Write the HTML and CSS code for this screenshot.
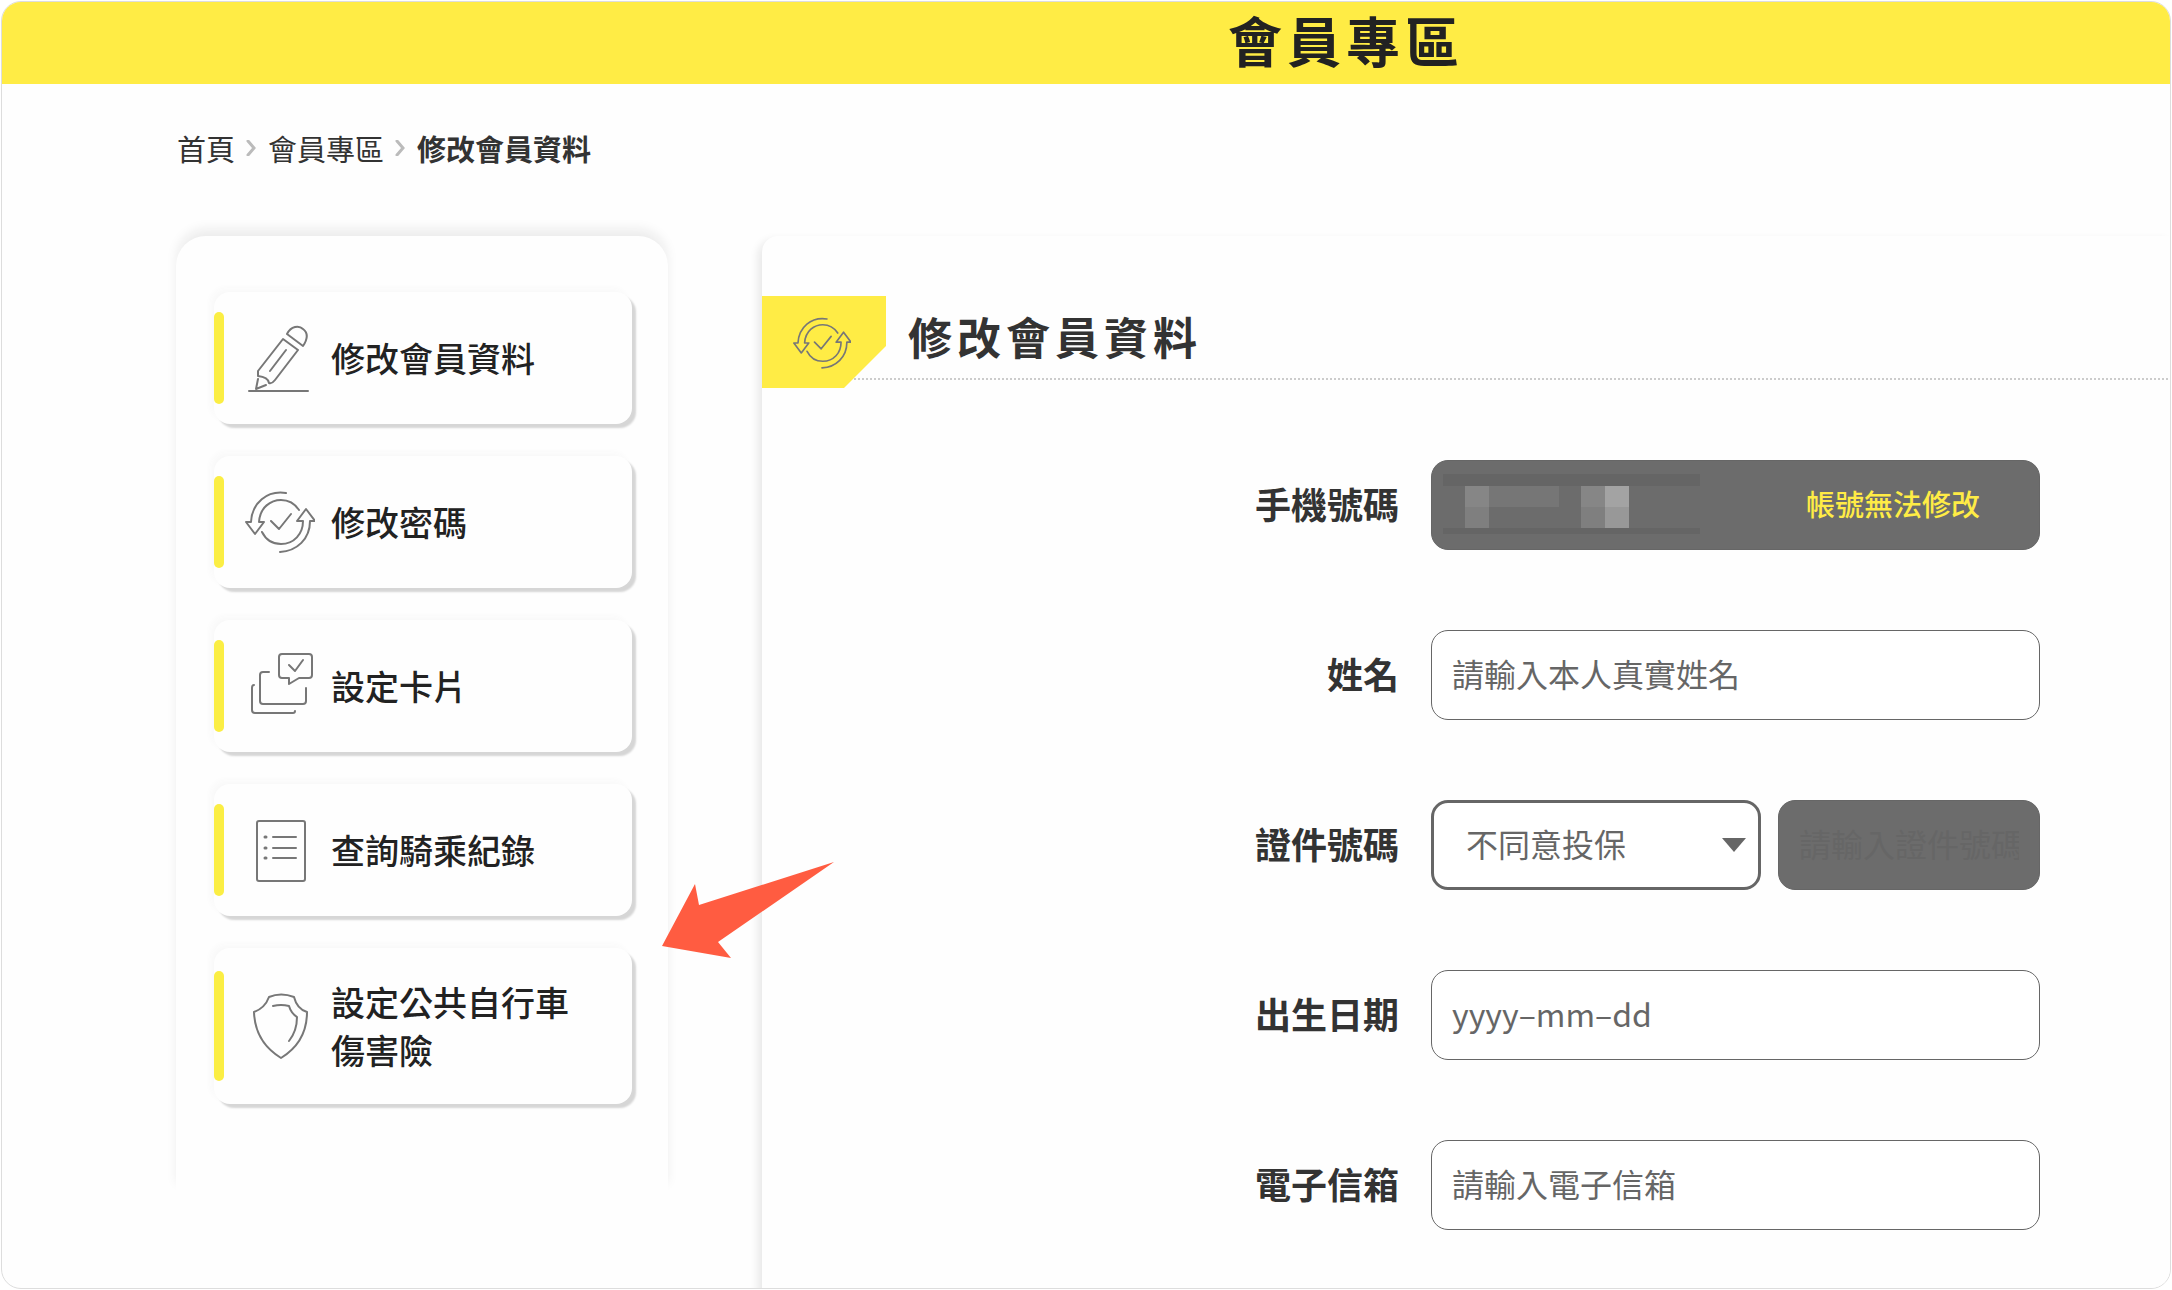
FILE: index.html
```html
<!DOCTYPE html>
<html lang="zh-Hant">
<head>
<meta charset="utf-8">
<title>會員專區</title>
<link rel="stylesheet" href="styles.css">
</head>
<body>
<svg class="defs" aria-hidden="true">
  <symbol id="icon-sync" viewBox="0 0 70 62">
    <path d="M41 2C22-1 7 12 6 31H1L10 43L19 31H14C15 16 26 9 36 9C43 9 50 13 54 19M17 41C21 49 28 53 36 53C49 53 58 43 58 30H52L61 18L70 30H65C65 48 52 60 35 61M26 30L34 38L46 23"/>
  </symbol>
</svg>
<div class="window">
  <header class="banner"><h1>會員專區</h1></header>
  <nav class="crumbs" aria-label="breadcrumb">
    <a href="#">首頁</a>
    <svg class="chevron" viewBox="0 0 9 16"><path d="M1 1L7 8L1 15"/></svg>
    <a href="#">會員專區</a>
    <svg class="chevron" viewBox="0 0 9 16"><path d="M1 1L7 8L1 15"/></svg>
    <strong>修改會員資料</strong>
  </nav>
  <div class="columns">
    <nav class="sidebar">
      <a class="item" href="#">
        <svg class="icon" viewBox="0 0 70 70"><path d="M4 68H63M38 16L53 27L30 57Q27 61 24 60Q23 54 13 53V48ZM42 11C46 3 54 2 58 6C62 9 64 14 58 23ZM41 27L25 48M13 56L11 66L21 62"/></svg>
        <span>修改會員資料</span>
      </a>
      <a class="item" href="#">
        <svg class="icon"><use href="#icon-sync"/></svg>
        <span>修改密碼</span>
      </a>
      <a class="item" href="#">
        <svg class="icon" viewBox="0 4 70 70"><path d="M24 25H18Q15 25 15 28V54Q15 57 18 57H58Q61 57 61 54V41M9 38Q7 38 7 41V63Q7 66 10 66H48Q50 66 50 64M37 7H64Q67 7 67 10V28Q67 31 64 31H54L44 37V31H37Q34 31 34 28V10Q34 7 37 7ZM44 18L50 24L58 13"/></svg>
        <span>設定卡片</span>
      </a>
      <a class="item" href="#">
        <svg class="icon" viewBox="0 0 70 70"><path d="M14 6H58Q60 6 60 8V64Q60 66 58 66H14Q12 66 12 64V8Q12 6 14 6ZM28 22H51M28 33H51M28 43H51"/><path class="dots" d="M20 22H21M20 33H21M20 43H21"/></svg>
        <span>查詢騎乘紀錄</span>
      </a>
      <a class="item" href="#">
        <svg class="icon" viewBox="0 0 70 70"><path d="M24 6Q36 1 49 6Q52 18 62 21Q62 51 36 67Q10 51 9 21Q20 17 24 6ZM28 15Q36 13 44 15Q46 22 52 26Q52 40 44 50"/></svg>
        <span>設定公共自行車傷害險</span>
      </a>
      <svg class="pointer" viewBox="0 0 173 97"><path d="M172 0L56 80L69 96L0 84L33 22L37 43Z"/></svg>
    </nav>
    <main class="panel">
      <div class="panel-head">
        <div class="tag"><svg><use href="#icon-sync"/></svg></div>
        <h2>修改會員資料</h2>
      </div>
      <form class="form">
        <label for="phone">手機號碼</label>
        <div class="field locked">
          <input id="phone" type="text" disabled>
          <span class="mask" aria-hidden="true"><i class="mid"></i><i class="faint"></i><i class="gap"></i><i class="mid"></i><i class="light"></i></span>
          <span class="note">帳號無法修改</span>
        </div>
        <label for="name">姓名</label>
        <div class="field"><input id="name" type="text" placeholder="請輸入本人真實姓名"></div>
        <label for="idtype">證件號碼</label>
        <div class="field pair">
          <div class="select">
            <select id="idtype"><option>不同意投保</option></select>
            <svg class="caret" viewBox="0 0 24 14"><path d="M0 0H24L12 14Z"/></svg>
          </div>
          <input class="idno" type="text" aria-label="證件號碼" placeholder="請輸入證件號碼" disabled>
        </div>
        <label for="birth">出生日期</label>
        <div class="field"><input id="birth" type="text" placeholder="yyyy–mm–dd"></div>
        <label for="email">電子信箱</label>
        <div class="field"><input id="email" type="email" placeholder="請輸入電子信箱"></div>
      </form>
    </main>
  </div>
</div>
</body>
</html>
```
FILE: styles.css
```css
* { box-sizing: border-box; }
body {
  margin: 0;
  padding: 1px;
  color: #333;
  background: #fff;
  font-family: "Noto Sans CJK TC", "Noto Sans", sans-serif;
}
h1, h2 { margin: 0; }
a { color: inherit; text-decoration: none; }
svg { fill: none; stroke: #777; stroke-width: 2; stroke-linejoin: round; stroke-linecap: round; }
.defs { display: none; }
.window {
  display: flex;
  flex-direction: column;
  min-height: calc(100vh - 2px);
  max-height: calc(100vh - 2px);
  overflow: hidden;
  border: 1px solid #ddd;
  border-radius: 20px;
  background: #fefefe;
}
.banner {
  flex: none;
  height: 82px;
  padding-left: 520px;
  background: #ffec45;
  text-align: center;
}
.banner h1 {
  color: #222;
  font-size: 54px;
  line-height: 78px;
  margin-top: -1px;
  letter-spacing: 5px;
}
.crumbs {
  flex: none;
  display: flex;
  align-items: center;
  gap: 11px;
  padding: 42px 175px 2px;
  font-size: 29px;
  line-height: 44px;
}
.chevron { width: 11px; height: 16px; stroke: #bbb; stroke-width: 3; stroke-linejoin: miter; }
.columns {
  flex: 1;
  display: flex;
  align-items: flex-start;
  gap: 94px;
  padding: 64px 0 0 174px;
}
.sidebar {
  position: relative;
  flex: none;
  width: 492px;
  padding: 56px 36px 88px 38px;
  display: flex;
  flex-direction: column;
  gap: 32px;
  border-radius: 30px 30px 0 0;
  background: #fefefe;
  box-shadow: 0 -8px 12px -1px #ececec;
}
.item {
  position: relative;
  display: flex;
  align-items: center;
  gap: 16px;
  min-height: 132px;
  padding: 30px 60px 30px 31px;
  border-radius: 16px;
  background: #fefefe;
  color: #222;
  font-size: 34px;
  font-weight: 500;
  line-height: 48px;
  box-shadow: 4px 4px 2px #d6d6d6, -4px -4px 6px #f9f9f9;
}
.item::before {
  content: "";
  position: absolute;
  left: 0;
  top: 15%;
  width: 10px;
  height: 70%;
  border-radius: 5px;
  background: #fbee44;
}
.icon { flex: none; width: 70px; height: 70px; }
.dots { stroke-width: 3; }
.pointer {
  position: absolute;
  left: 486px;
  top: 626px;
  z-index: 2;
  width: 173px;
  height: 97px;
  fill: #ff5c41;
  stroke: none;
}
.panel {
  flex: 1;
  height: 1100px;
  padding-top: 60px;
  border-radius: 16px 0 0 0;
  background: #fefefe;
  box-shadow: -4px 4px 8px #e8e8e8;
}
.panel-head {
  display: flex;
  align-items: flex-start;
  gap: 22px;
  height: 92px;
  background: linear-gradient(90deg, #ccc 50%, transparent 50%) 0 82px / 4px 2px repeat-x;
}
.tag {
  flex: none;
  display: grid;
  place-items: center;
  width: 124px;
  height: 92px;
  padding: 2px 4px 0 0;
  background: #ffec45;
  clip-path: polygon(0 0, 100% 0, 100% 50px, 82px 100%, 0 100%);
}
.tag svg { width: 58px; height: 52px; }
.panel-head h2 { font-size: 44px; line-height: 80px; letter-spacing: 5px; }
.form {
  display: grid;
  grid-template-columns: 1fr 609px;
  column-gap: 32px;
  row-gap: 80px;
  align-items: center;
  padding: 72px 130px 0 0;
}
.form label {
  padding-bottom: 4px;
  text-align: right;
  font-size: 36px;
  line-height: 48px;
  font-weight: 700;
}
.field { position: relative; height: 90px; }
input, select {
  display: block;
  width: 100%;
  height: 90px;
  padding: 0 20px 4px;
  border: 1px solid #666;
  border-radius: 17px;
  background: #fff;
  color: #666;
  font: 32px "Noto Sans CJK TC", "Noto Sans", sans-serif;
}
input::placeholder { color: #666; opacity: 1; }
input:disabled { background: #6c6c6c; }
input:disabled::placeholder { color: #666; }
.note {
  position: absolute;
  right: 60px;
  top: 21px;
  color: #ffec45;
  font-size: 29px;
  font-weight: 500;
  line-height: 44px;
}
.mask {
  position: absolute;
  left: 12px;
  top: 14px;
  display: flex;
  width: 257px;
  height: 60px;
  padding: 0 22px;
  border: solid #656565;
  border-width: 12px 0 6px;
}
.mask i { width: 24px; }
.mask .mid { background: linear-gradient(#868686 50%, #7f7f7f 50%); }
.mask .faint { width: 70px; background: linear-gradient(#767676 50%, transparent 50%); }
.mask .gap { width: 22px; }
.mask .light { background: linear-gradient(#a3a3a3 50%, #989898 50%); }
.pair { display: flex; gap: 17px; }
.select { position: relative; flex: none; width: 330px; }
select { appearance: none; padding: 0 32px 4px; border-width: 3px; }
.caret {
  position: absolute;
  right: 15px;
  top: 38px;
  width: 24px;
  height: 14px;
  fill: #666;
  stroke: none;
  pointer-events: none;
}
.idno { flex: 1; min-width: 0; }
```
